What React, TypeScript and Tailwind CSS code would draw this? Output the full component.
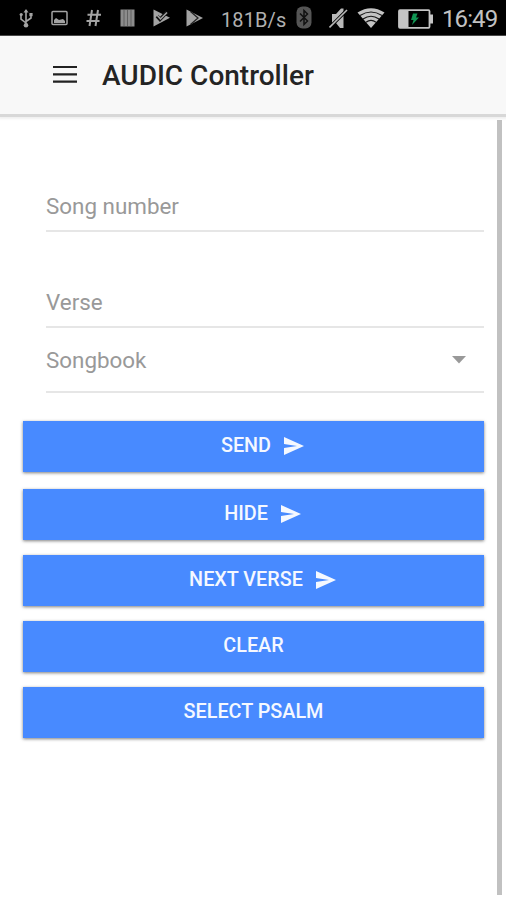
import type { ReactNode } from "react";

interface FieldProps {
  label: string;
  className: string;
  children?: ReactNode;
}

interface ActionButtonProps {
  label: string;
  className?: string;
  withIcon?: boolean;
}

function SendIcon() {
  return (
    <svg
      viewBox="0 0 20 18"
      fill="currentColor"
      className="mb-px ml-[13px] h-[18px] w-5 shrink-0"
    >
      <path d="M0 0 20 9 0 18V11L13 9 0 7Z" />
    </svg>
  );
}

function StatusBar() {
  return (
    <div className="flex h-9 items-start overflow-hidden border-b border-[#4a4a4a] bg-black text-[#a3a3a3]">
      <svg viewBox="0 0 14 20" fill="none" stroke="currentColor" strokeWidth="1.6" className="mt-2 ml-[19px] h-5 w-[14px] shrink-0">
        <path d="M7 2V18M2 7v4l5 4M12 7v3l-5 3.5" />
        <path d="M4.5 4.5 7 1l2.5 3.5Z" fill="currentColor" stroke="none" />
        <circle cx="2.2" cy="6.5" r="1.6" fill="currentColor" stroke="none" />
        <path d="M10.4 5h3.2v3.2h-3.2Z" fill="currentColor" stroke="none" />
        <circle cx="7" cy="17.3" r="2.3" fill="currentColor" stroke="none" />
      </svg>
      <svg viewBox="0 0 17 16" className="mt-[10px] ml-[18px] h-4 w-[17px] shrink-0">
        <rect x="1" y="1.5" width="15" height="13" rx="1" fill="none" stroke="currentColor" strokeWidth="1.5" />
        <path d="M3 13V10l2-2L8 10l4-1L14 11v2Z" fill="currentColor" />
      </svg>
      <svg viewBox="0 0 15 18" fill="none" stroke="currentColor" strokeWidth="2" className="mt-[9px] ml-[18px] h-[18px] w-[15px] shrink-0">
        <path d="M6 1 3.5 17M12 1 9.5 17M1.5 5.8H15M.5 12H13.5" />
      </svg>
      <svg viewBox="0 0 15 18" className="mt-[9px] ml-[19px] h-[18px] w-[15px] shrink-0">
        <path d="M.5.5h14v17H.5Z" fill="#8c8c8c" />
        <path d="M4 1v16M7.5 1v16M11 1v16" stroke="#5c5c5c" strokeWidth=".9" />
      </svg>
      <svg viewBox="0 0 17 18" className="mt-[9px] ml-[18px] h-[18px] w-[17px] shrink-0">
        <path d="M.5.5 17 8.8.5 17.5Z" fill="currentColor" />
        <path d="m4 7 3 3.5 7-7.500" fill="none" stroke="#111" strokeWidth="3.500" />
        <path d="m4 6 3.500 4L14 3.500" fill="none" stroke="currentColor" strokeWidth="1.500" />
      </svg>
      <svg viewBox="0 0 17 18" className="mt-[9px] ml-4 h-[18px] w-[17px] shrink-0">
        <path d="M.5.5 17 9 .5 17.5Z" fill="currentColor" />
        <path d="M4.5 2.5 12 9l-7.5 6.5" fill="none" stroke="#222" strokeWidth="1.3" />
      </svg>
      <span className="mt-[6px] ml-[18px] w-[66px] text-[20px] leading-7 tracking-[0.1px] whitespace-nowrap text-[#b0b0b0]">
        181B/s
      </span>
      <svg viewBox="0 0 16 23" className="mt-[6px] ml-[9px] h-[23px] w-4 shrink-0">
        <rect x=".5" y=".5" width="15" height="22" rx="6" fill="#555" />
        <path d="m4 7.5 7.5 7.5L8 18.5v-14L11.5 8 4 15.5" fill="none" stroke="#111" strokeWidth="1.5" />
      </svg>
      <svg viewBox="0 0 19 22" className="mt-[7px] ml-[17px] h-[22px] w-[19px] shrink-0">
        <path d="M3 7h4l5-5.5h2.500v19.500H11L7 16H3Z" fill="#b8b8b8" />
        <path d="M.5 20.500 18 3" stroke="#000" strokeWidth="3.200" />
        <path d="M.5 20.500 18 3" stroke="#b8b8b8" strokeWidth="1.600" />
      </svg>
      <svg viewBox="0 0 28 20" className="mt-2 ml-[9px] h-5 w-7 shrink-0">
        <path d="M.5 4.5Q14-4 27.5 4.5L14 20Z" fill="#c4c4c4" />
        <path d="M3 7.5Q14 .5 25 7.5M6 11Q14 5.5 22 11M9 14.3Q14 10.5 19 14.3" fill="none" stroke="#151515" strokeWidth="1.2" />
      </svg>
      <svg viewBox="0 0 36 20" className="mt-[9px] ml-[13px] h-5 w-9 shrink-0">
        <rect x="1" y="1.2" width="30.5" height="17.6" rx="1" fill="none" stroke="#c4c4c4" strokeWidth="1.8" />
        <path d="M1 1h9.5v18H1ZM32 5.5h3v9h-3Z" fill="#c4c4c4" />
        <path d="M15 4.5h4.5L18 8.5h3L14 16l1.5-5H13Z" fill="#109653" />
      </svg>
      <span className="mt-1 ml-[8px] text-[24px] leading-[30px] tracking-[-0.9px] whitespace-nowrap text-[#c2c2c2]">
        16:49
      </span>
    </div>
  );
}

function Header() {
  return (
    <header className="z-10 flex h-[81px] items-center border-b-3 border-[#d8d8d8] bg-[#f8f8f8] pt-px shadow-[0_1px_2px_1px_rgba(0,0,0,0.06)]">
      <svg
        viewBox="0 0 24 18"
        stroke="#222"
        strokeWidth="2.2"
        className="mb-[3px] ml-[53px] h-[18px] w-6 shrink-0"
      >
        <path d="M0 2h24M0 9.3h24M0 16.6h24" />
      </svg>
      <h1 className="ml-[25px] text-[28px] font-medium whitespace-nowrap text-[#242424]">
        AUDIC Controller
      </h1>
    </header>
  );
}

function Field({ label, className, children }: FieldProps) {
  return (
    <div
      className={`ml-[23px] flex items-end justify-between border-b-2 border-[#e6e6e6] text-[22.4px] leading-7 text-[#999] ${className}`}
    >
      <span>{label}</span>
      {children}
    </div>
  );
}

function ActionButton({ label, className = "", withIcon }: ActionButtonProps) {
  return (
    <button
      className={`flex h-[50.5px] shrink-0 items-center justify-center bg-[#488aff] text-[19.8px] font-medium whitespace-nowrap text-[#f5f8ff] shadow-[0_1px_3px_rgba(0,0,0,0.5)] ${withIcon ? "pl-[18px]" : ""} ${className}`}
    >
      <span>{label}</span>
      {withIcon && <SendIcon />}
    </button>
  );
}

export default function App() {
  return (
    <div className="flex h-[900px] w-[506px] flex-col overflow-hidden bg-white font-[Roboto,sans-serif]">
      <StatusBar />
      <Header />
      <main className="flex flex-1 justify-between pt-[3px] pr-1 pb-[5px]">
        <div className="ml-[23px] flex w-[461px] flex-col">
          <Field label="Song number" className="h-[112px] pb-[10px]" />
          <Field label="Verse" className="h-24 pb-[10px]" />
          <Field label="Songbook" className="h-[64.5px] pb-[17px]">
            <svg
              viewBox="0 0 14 8"
              fill="currentColor"
              className="mr-[18px] mb-[10px] h-2 w-[14px]"
            >
              <path d="M0 0h14L7 7.5Z" />
            </svg>
          </Field>
          <ActionButton label="SEND" className="mt-[28.5px]" withIcon />
          <ActionButton label="HIDE" className="mt-[17.5px]" withIcon />
          <ActionButton label="NEXT VERSE" className="mt-[15.5px]" withIcon />
          <ActionButton label="CLEAR" className="mt-[15.5px]" />
          <ActionButton label="SELECT PSALM" className="mt-[15.5px]" />
        </div>
        <div className="w-[5px] bg-[#c1c1c1]" />
      </main>
    </div>
  );
}
